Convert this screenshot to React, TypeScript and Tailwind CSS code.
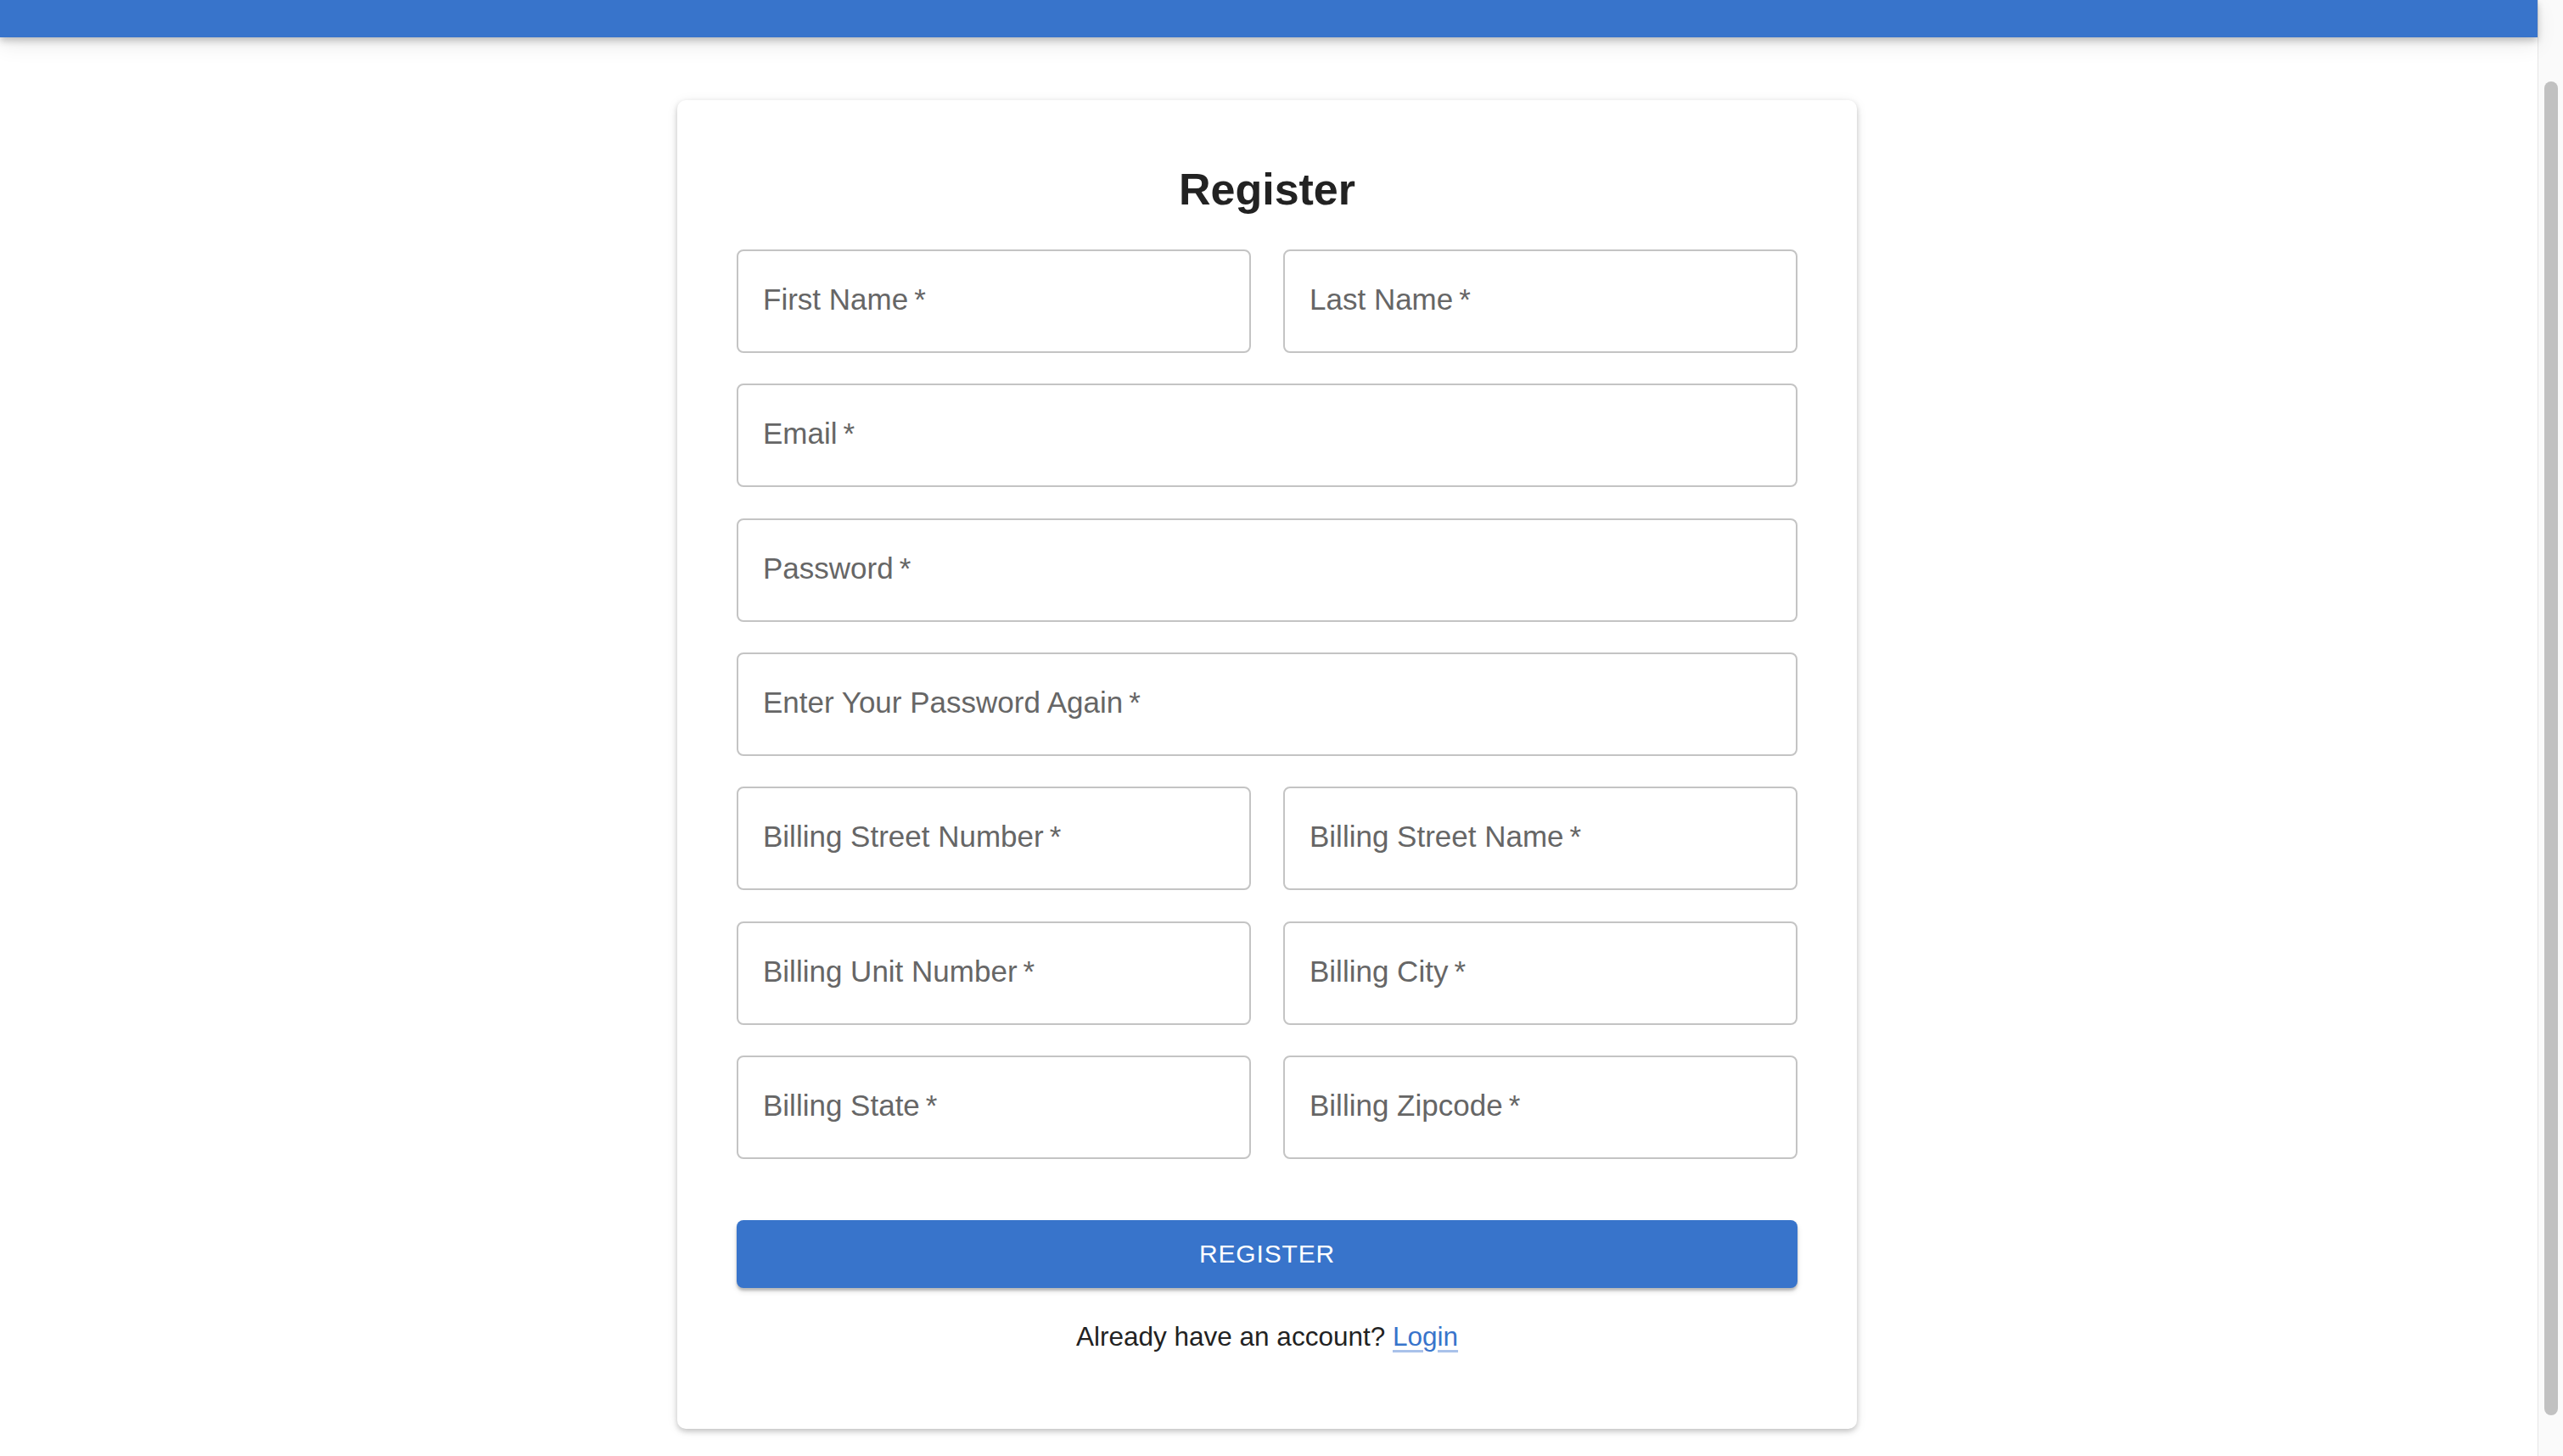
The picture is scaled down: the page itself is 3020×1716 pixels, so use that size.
import React from "react";

type Field = { label: string; full?: boolean };

const fields: Field[] = [
  { label: "First Name" },
  { label: "Last Name" },
  { label: "Email", full: true },
  { label: "Password", full: true },
  { label: "Enter Your Password Again", full: true },
  { label: "Billing Street Number" },
  { label: "Billing Street Name" },
  { label: "Billing Unit Number" },
  { label: "Billing City" },
  { label: "Billing State" },
  { label: "Billing Zipcode" },
];

function TextField({ label, full }: Field) {
  return (
    <div
      className={
        (full ? "col-span-2 " : "") +
        "h-[122px] flex items-center rounded-[8px] border-2 border-[#c4c4c4] pl-[29px] pb-[5px]"
      }
    >
      <span className="text-[35px] leading-none text-[#666666]">
        {label}
        {"\u2009*"}
      </span>
    </div>
  );
}

export default function App() {
  return (
    <div className="flex h-[1716px] w-full overflow-hidden bg-white font-['Liberation_Sans',Arial,sans-serif]">
      <div className="flex flex-1 flex-col">
        <header className="relative z-10 h-[44px] shrink-0 bg-[#3874cb] shadow-[0_4px_8px_rgba(0,0,0,0.22),0_10px_24px_rgba(0,0,0,0.08)]" />

        <main className="flex justify-center pt-[74px] pr-[4px]">
          <div className="w-[1390px] rounded-[10px] bg-white px-[70px] pt-[79px] pb-[91px] shadow-[0_3px_6px_rgba(0,0,0,0.2),0_2px_14px_rgba(0,0,0,0.08)]">
            <h1 className="mb-[45px] text-center text-[52px] font-bold leading-[52px] text-[#222222]">
              Register
            </h1>

            <form className="grid grid-cols-2 gap-x-[38px] gap-y-[36.33px]">
              {fields.map((f) => (
                <TextField key={f.label} {...f} />
              ))}
            </form>

            <button
              type="button"
              className="mt-[72px] flex h-[80px] w-full items-center justify-center rounded-[8px] bg-[#3874cb] text-[30px] uppercase tracking-[0.02857em] text-white shadow-[0_3px_3px_rgba(0,0,0,0.2),0_4px_6px_rgba(0,0,0,0.12)]"
            >
              Register
            </button>

            <p className="mt-[39px] text-center text-[31.5px] leading-[36px] text-[#222222]">
              Already have an account?{" "}
              <a
                href="#"
                className="text-[#3874cb] underline decoration-[#a9c2ea] decoration-[3px] underline-offset-[5px]"
              >
                Login
              </a>
            </p>
          </div>
        </main>
      </div>

      <div className="flex w-[30px] shrink-0 flex-col border-l border-[#e6e6e6] bg-[#fafafa] pt-[96px] pb-[48px] pl-[7px] pr-[6px]">
        <div className="flex-1 rounded-full bg-[#c1c1c1]" />
      </div>
    </div>
  );
}
